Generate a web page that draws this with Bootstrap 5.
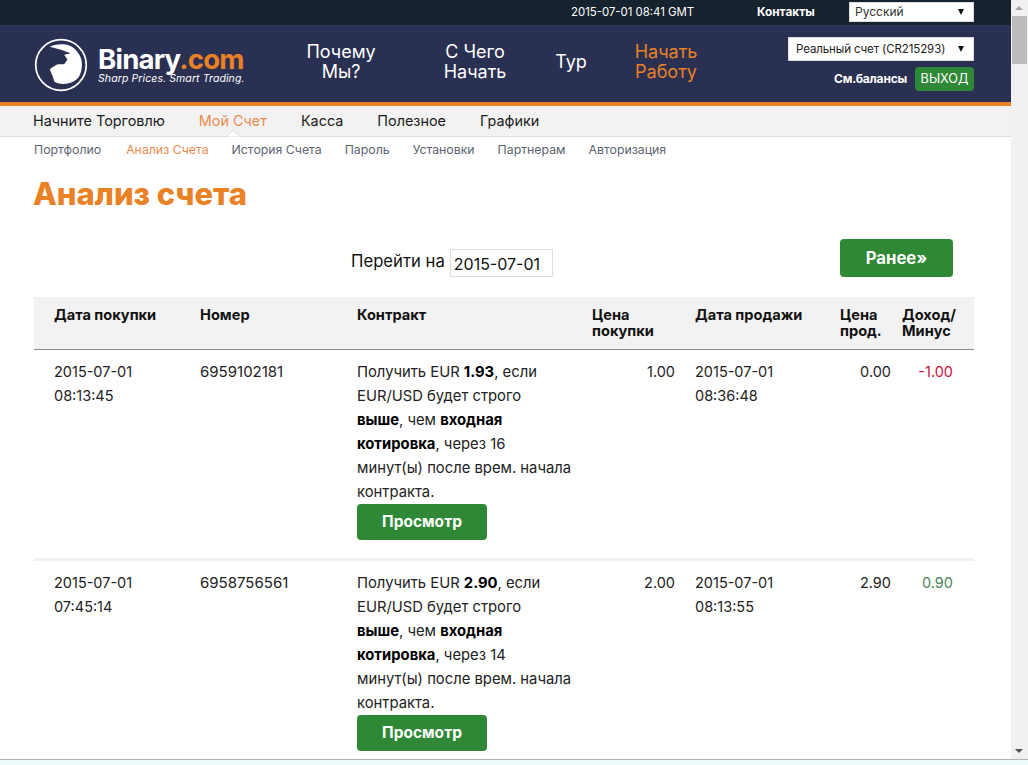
<!DOCTYPE html>
<html lang="ru"><head><meta charset="utf-8"><title>Анализ счета</title>
<link href="https://cdn.jsdelivr.net/npm/bootstrap@5.3.0/dist/css/bootstrap.min.css" rel="stylesheet">
<style>
html,body{height:765px;overflow:hidden;background:#fff}
body{font-family:Inter,"Open Sans",sans-serif;color:#111;font-size:15px;line-height:24px}
.shell{height:759px;overflow:hidden}
.pagearea{width:1011px;height:759px;overflow:hidden}
.sbar{width:17px;height:759px;background:#f1f1f1}
.sbar-thumb{height:48px;margin:16px 1px 0;background:#bcbcbc;width:15px}
.sbar-up,.sbar-down{width:0;height:0;border-left:4px solid transparent;border-right:4px solid transparent;margin:0 auto}
.sbar-up{border-bottom:4px solid #a3a3a3;position:absolute;top:6px;left:4px}
.sbar-down{border-top:4px solid #505050;position:absolute;bottom:6px;left:4px}
.strip{height:6px;background:#eefbfb;border-top:1px solid #a9b4b4}
.topline{height:26px;background:#16222e;border-bottom:1px solid #2d3558;color:#fff;font-size:11.4px;padding-bottom:2px}
.clock{width:122px;margin-right:64px;white-space:nowrap}
.contacts{font-weight:700;color:#fff;width:92px;text-decoration:none;white-space:nowrap;font-size:11.8px}
.sel-wrap{position:relative;background:#fff;color:#333;border:1px solid #ddd;display:block;text-align:left;font-family:inherit;white-space:nowrap;padding:0}
.sel-wrap::after{content:"";position:absolute;top:50%;margin-top:-3px;right:9px;border-left:3.5px solid transparent;border-right:3.5px solid transparent;border-top:6px solid #111}
.sel-lang{width:125px;height:20px;margin-right:37px;font-size:12px;line-height:18px;padding-left:5px}
.sel-acct{width:186px;height:24px;font-size:11.5px;line-height:21px;padding-left:7px;color:#222;letter-spacing:-.1px}
.mainbar{height:80px;background:#2a3052;border-bottom:4px solid #ea8125;padding:0 37px 4px 34px}
.brandbox{width:224px;gap:10px;margin-top:5px}
.brandname{font-size:27.6px;font-weight:700;color:#fff;line-height:28px;letter-spacing:-.8px;white-space:nowrap}
.brandname span{color:#ea8125}
.brandtag{font-size:10.5px;font-style:italic;color:#fff;line-height:12px;white-space:nowrap;letter-spacing:.1px}
.bignav{font-size:18px;line-height:20px;text-align:center;color:#fff;text-decoration:none}
.bignav-hot{color:#ea8125}
.w1{width:90px;margin-left:38px}
.w2{width:90px;margin-left:44px}
.w3{width:60px;margin-left:21px}
.w4{width:90px;margin-left:20px}
.acctbox{gap:6px;margin-left:auto;margin-top:4px}
.balances{font-size:12px;font-weight:700;color:#fff;text-decoration:none;white-space:nowrap;letter-spacing:-.2px}
.logout{background:#2e8836;color:#fff;font-size:12.7px;border-radius:4px;width:59px;height:24px;line-height:24px;text-align:center;text-decoration:none;display:block}
.tabs1{height:31px;background:#f2f2f2;border-bottom:1px solid #ddd;padding-left:33px;font-size:14.4px;gap:34px;position:relative}
.tabs1 a{color:#1c1c1c;text-decoration:none;white-space:nowrap}
.tabs1 a.act{color:#ee8a4c}
.notch{position:absolute;left:226px;bottom:-1px;width:14px;height:7px;overflow:hidden}
.tabs2{padding:0 0 2px 34px;height:27px;font-size:12.3px;gap:23px}
.tabs2 a{color:#5c6470;text-decoration:none;white-space:nowrap}
.tabs2 a:first-child{margin-right:2px}
.tabs2 a.act{color:#ee8a4c}
h1.ttl{font-size:31px;font-weight:800;color:#ea8125;line-height:38px;margin:11px 0 0 33px;letter-spacing:0}
.toolrow{margin:26px 37px 20px 34px;height:38px;position:relative}
.gotolabel{font-size:16.7px;color:#111;margin-top:10px;white-space:nowrap}
.gotoinput{width:103px;height:28px;border:1px solid #ddd;margin:10px 0 0 5px;padding:2px 3px 0;font-size:16px;color:#111;font-family:inherit;outline:0}
.earlier{width:113px;height:38px;background:#2e8836;color:#fff;font-weight:700;font-size:16.7px;border-radius:4px;margin-right:21px;text-decoration:none;line-height:38px;text-align:center;display:block}
.datatab{width:940px;margin-left:34px;table-layout:fixed;border-collapse:collapse;font-size:14.5px}
.datatab th{background:#f2f2f2;font-weight:700;font-size:14.6px;line-height:16px;vertical-align:top;padding:10px 0 10px 20px;height:52px;border-bottom:1px solid #888}
.datatab td{padding:10px 0 7px 20px;vertical-align:top;line-height:24px;color:#222}
.datatab td.txtcell{font-size:14.8px;white-space:nowrap}
.datatab td.idcell{font-size:15px}
.datatab tr.sep td{border-bottom:3px solid #f2f2f2}
.datatab td b{color:#000}
.datatab .r{text-align:right}
.datatab .last{padding-left:11px;padding-right:21px}
.lose{color:#c8143c!important}
.gain{color:#4a8458!important}
.viewbtn{display:block;width:130px;height:36px;line-height:36px;background:#2e8836;color:#fff;font-weight:700;font-size:15.500px;text-align:center;border-radius:4px;text-decoration:none;margin-bottom:11px}
</style></head>
<body>
<div class="shell d-flex">
<div class="pagearea">
  <div class="topline d-flex align-items-center justify-content-end">
    <span class="clock">2015-07-01 08:41 GMT</span>
    <a class="contacts" href="#">Контакты</a>
    <button type="button" class="sel-wrap sel-lang">Русский</button>
  </div>
  <div class="mainbar d-flex align-items-center">
    <div class="brandbox d-flex align-items-center">
      <svg width="54" height="54" viewBox="0 0 56 56" aria-hidden="true">
        <circle cx="28" cy="28" r="26.2" fill="none" stroke="#fff" stroke-width="1.8"/>
        <path fill="#fff" d="M16.300 9C22 6.500 28 6 33 6.700C38 8 42 10 44.700 14C48 18 49.700 22 49.700 27.300C49.700 33 48.500 37 46.300 40.700C43 44.500 39 46.500 34.700 47.300C30 48 25 47.500 21.300 45.700C20 41 18 36 16.300 32.300C19 30.500 22 28.500 24.700 27.300L31.300 27.300L34.700 22.300L31.300 17.300L38 15.700L28 12.300C24 11 20 10 16.300 9Z"/>
      </svg>
      <div>
        <div class="brandname">Binary<span>.com</span></div>
        <div class="brandtag">Sharp Prices. Smart Trading.</div>
      </div>
    </div>
    <a class="bignav w1" href="#">Почему Мы?</a>
    <a class="bignav w2" href="#">С Чего Начать</a>
    <a class="bignav w3" href="#">Тур</a>
    <a class="bignav bignav-hot w4" href="#">Начать Работу</a>
    <div class="acctbox d-flex flex-column align-items-end">
      <button type="button" class="sel-wrap sel-acct">Реальный счет (CR215293)</button>
      <div class="d-flex align-items-center gap-2"><a class="balances" href="#">См.балансы</a><a class="logout" href="#">ВЫХОД</a></div>
    </div>
  </div>
  <div class="tabs1 d-flex align-items-center">
    <a href="#">Начните Торговлю</a><a class="act" href="#">Мой Счет</a><a href="#">Касса</a><a href="#">Полезное</a><a href="#">Графики</a>
    <svg class="notch" viewBox="0 0 14 7" aria-hidden="true"><path d="M0 7L7 0L14 7Z" fill="#fff" stroke="#ddd"/></svg>
  </div>
  <div class="tabs2 d-flex align-items-center">
    <a href="#">Портфолио</a><a class="act" href="#">Анализ Счета</a><a href="#">История Счета</a><a href="#">Пароль</a><a href="#">Установки</a><a href="#">Партнерам</a><a href="#">Авторизация</a>
  </div>
  <h1 class="ttl">Анализ счета</h1>
  <div class="toolrow d-flex justify-content-end">
    <div class="d-flex position-absolute top-0" style="left:317px"><span class="gotolabel">Перейти на</span><input class="gotoinput" value="2015-07-01" aria-label="Дата"></div>
    <a class="earlier" href="#">Ранее»</a>
  </div>
  <table class="datatab">
    <colgroup><col style="width:146px"><col style="width:157px"><col style="width:235px"><col style="width:103px"><col style="width:145px"><col style="width:71px"><col style="width:83px"></colgroup>
    <thead><tr><th>Дата покупки</th><th>Номер</th><th>Контракт</th><th>Цена покупки</th><th>Дата продажи</th><th>Цена прод.</th><th class="last">Доход/ Минус</th></tr></thead>
    <tbody>
      <tr class="sep"><td>2015-07-01 08:13:45</td><td class="idcell">6959102181</td><td class="txtcell">Получить EUR <b>1.93</b>, если<br>EUR/USD будет строго<br><b>выше</b>, чем <b>входная</b><br><b>котировка</b>, через 16<br>минут(ы) после врем. начала<br>контракта.<a class="viewbtn" href="#">Просмотр</a></td><td class="r">1.00</td><td>2015-07-01 08:36:48</td><td class="r">0.00</td><td class="r last lose">-1.00</td></tr>
      <tr><td>2015-07-01 07:45:14</td><td class="idcell">6958756561</td><td class="txtcell">Получить EUR <b>2.90</b>, если<br>EUR/USD будет строго<br><b>выше</b>, чем <b>входная</b><br><b>котировка</b>, через 14<br>минут(ы) после врем. начала<br>контракта.<a class="viewbtn" href="#">Просмотр</a></td><td class="r">2.00</td><td>2015-07-01 08:13:55</td><td class="r">2.90</td><td class="r last gain">0.90</td></tr>
    </tbody>
  </table>
</div>
<div class="sbar position-relative">
  <div class="sbar-up"></div><div class="sbar-thumb"></div><div class="sbar-down"></div>
</div>
</div>
<div class="strip"></div>
<script src="https://cdn.jsdelivr.net/npm/bootstrap@5.3.0/dist/js/bootstrap.bundle.min.js"></script>
</body></html>
